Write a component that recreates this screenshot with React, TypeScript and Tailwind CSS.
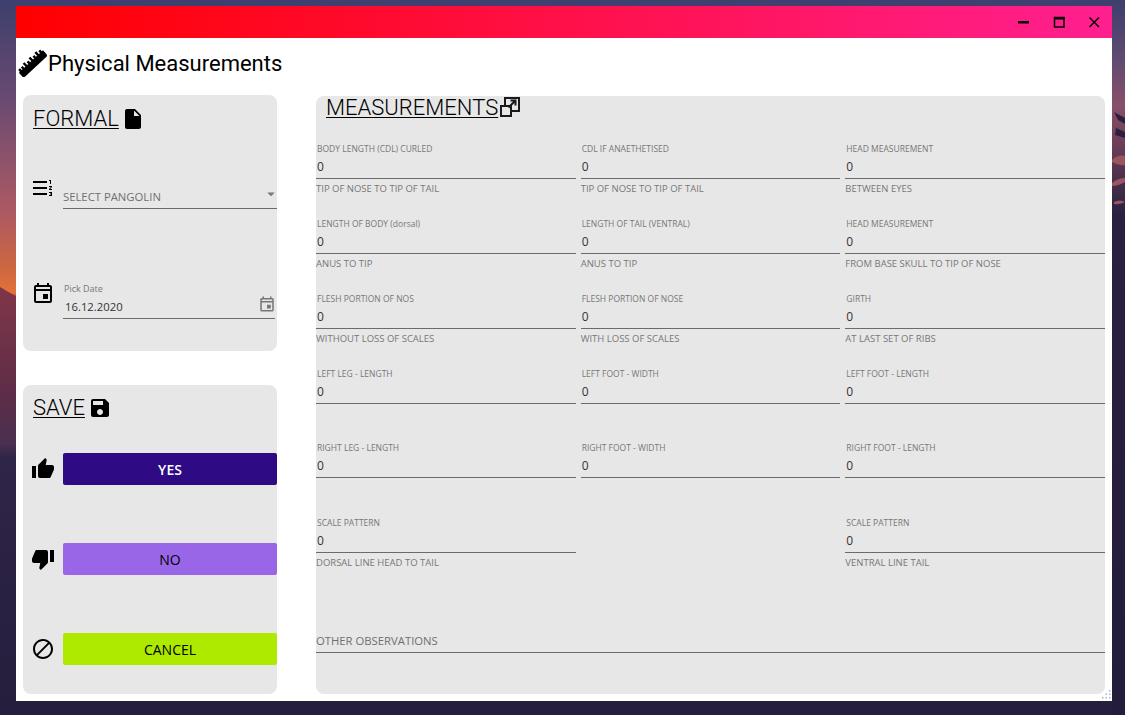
import { MdInsertDriveFile, MdFormatListNumberedRtl, MdOutlineEvent, MdSave, MdThumbUp, MdThumbDown, MdBlock, MdArrowDropDown } from "react-icons/md";

const rows = [
  [
    { label: "BODY LENGTH (CDL) CURLED", help: "TIP OF NOSE TO TIP OF TAIL" },
    { label: "CDL IF ANAETHETISED", help: "TIP OF NOSE TO TIP OF TAIL" },
    { label: "HEAD MEASUREMENT", help: "BETWEEN EYES" },
  ],
  [
    { label: "LENGTH OF BODY (dorsal)", help: "ANUS TO TIP" },
    { label: "LENGTH OF TAIL (VENTRAL)", help: "ANUS TO TIP" },
    { label: "HEAD MEASUREMENT", help: "FROM BASE SKULL TO TIP OF NOSE" },
  ],
  [
    { label: "FLESH PORTION OF NOS", help: "WITHOUT LOSS OF SCALES" },
    { label: "FLESH PORTION OF NOSE", help: "WITH LOSS OF SCALES" },
    { label: "GIRTH", help: "AT LAST SET OF RIBS" },
  ],
  [
    { label: "LEFT LEG - LENGTH", help: "" },
    { label: "LEFT FOOT - WIDTH", help: "" },
    { label: "LEFT FOOT - LENGTH", help: "" },
  ],
  [
    { label: "RIGHT LEG - LENGTH", help: "" },
    { label: "RIGHT FOOT - WIDTH", help: "" },
    { label: "RIGHT FOOT - LENGTH", help: "" },
  ],
  [
    { label: "SCALE PATTERN", help: "DORSAL LINE HEAD TO TAIL" },
    null,
    { label: "SCALE PATTERN", help: "VENTRAL LINE TAIL" },
  ],
];

const Wallpaper = () => (
  <svg className="absolute inset-0" width="1125" height="715">
    <defs>
      <linearGradient id="left" x1="0" y1="0" x2="0" y2="1">
        <stop offset="0" stopColor="#3d3f6d" />
        <stop offset="0.14" stopColor="#6a4a72" />
        <stop offset="0.3" stopColor="#ae5a62" />
        <stop offset="0.38" stopColor="#d0683f" />
        <stop offset="0.41" stopColor="#e57238" />
        <stop offset="0.42" stopColor="#7c3548" />
        <stop offset="0.55" stopColor="#5e2d48" />
        <stop offset="0.62" stopColor="#4a3050" />
        <stop offset="0.64" stopColor="#2f2548" />
        <stop offset="1" stopColor="#251e3c" />
      </linearGradient>
      <linearGradient id="right" x1="0" y1="0" x2="0" y2="1">
        <stop offset="0" stopColor="#3d3f6d" />
        <stop offset="0.08" stopColor="#5f4a72" />
        <stop offset="0.15" stopColor="#8a4f68" />
        <stop offset="0.2" stopColor="#6d3f58" />
        <stop offset="0.3" stopColor="#2a2140" />
        <stop offset="1" stopColor="#231c3a" />
      </linearGradient>
    </defs>
    <rect x="0" y="0" width="1125" height="715" fill="#251e3c" />
    <rect x="0" y="0" width="16" height="715" fill="url(#left)" />
    <path d="M0 287Q8 292 16 296V302H0Z" fill="#7c3548" />
    <rect x="0" y="0" width="1125" height="6" fill="#3f4070" />
    <rect x="1112" y="0" width="13" height="715" fill="url(#right)" />
    <path d="M1114 112 L1125 118 L1125 124 L1118 120Z M1116 128 L1125 132 L1125 138 L1115 135Z" fill="#2a2140" />
    <path d="M1112 160 Q1118 154 1125 156 L1125 165 Q1118 166 1112 162Z M1112 183 Q1118 178 1125 178 L1125 182 Q1118 186 1112 186Z M1114 202 Q1120 199 1125 202 Q1119 205 1114 204Z" fill="#9a5560" />
  </svg>
);

const WindowButtons = () => (
  <div className="flex items-center gap-[21px] pr-[11px]">
    <svg width="14" height="14" viewBox="0 0 14 14"><rect x="1" y="6" width="11" height="2.5" fill="#000" /></svg>
    <svg width="14" height="14" viewBox="0 0 14 14"><path d="M2.5 2.5h9.5v9.5h-9.5z" fill="none" stroke="#000" strokeWidth="1.5" /><rect x="2" y="2" width="10.5" height="2.5" fill="#000" /></svg>
    <svg width="14" height="14" viewBox="0 0 14 14"><path d="M2.5 2.5l9.5 9.5M12 2.5l-9.5 9.5" stroke="#000" strokeWidth="1.4" /></svg>
  </div>
);

const RulerIcon = () => (
  <svg width="30" height="30" viewBox="0 0 30 30">
    <g transform="translate(15 15) rotate(-43)" fill="#000">
      <rect x="-17" y="-1" width="33" height="7" />
      {[-15.5, -12, -8, -4, 0, 4, 8, 12].map((x) => (
        <rect key={x} x={x} y={x % 8 === 0 ? -5 : -3.5} width="2.4" height="5" />
      ))}
    </g>
  </svg>
);

const LinkBoxIcon = () => (
  <svg width="21" height="21" viewBox="0 0 21 21" fill="none" stroke="#1a1a1a" strokeWidth="2" className="ml-px">
    <path d="M6 9V2h14v13h-7" />
    <rect x="2" y="10" width="10" height="10" />
    <path d="M9.5 11.5l7-7M11.5 4.5h5v5" />
  </svg>
);

const Field = ({ label, help }: { label: string; help: string }) => (
  <div className="flex h-[74.8px] flex-col">
    <div className="h-[18px] pl-px text-[8.5px] leading-[19px] text-[#777]">{label}</div>
    <div className="h-[22px] border-b border-[#6b6b6b] pl-px text-xs leading-[19px] text-[#333]">0</div>
    <div className="mt-[3px] text-[9.5px] leading-[14px] text-[#777]">{help}</div>
  </div>
);

const ActionRow = ({ icon, label, className }: { icon: React.ReactNode; label: string; className: string }) => (
  <div className="flex items-center">
    <div className="flex w-10 justify-center text-black">{icon}</div>
    <button className={`flex h-8 w-[214px] items-center justify-center rounded-[2px] pt-px text-sm ${className}`}>{label}</button>
  </div>
);

export default function App() {
  return (
    <div className="relative h-[715px] w-[1125px] overflow-hidden pl-4 pt-[6px] font-['Open_Sans',sans-serif]">
      <Wallpaper />
      <div className="relative flex h-[695px] w-[1096px] flex-col bg-white">
        <div className="flex h-8 items-center justify-end bg-[linear-gradient(90deg,#ff0000,#ff2090)]">
          <WindowButtons />
        </div>
        <div className="flex h-[57px] items-start pl-[1px] pt-[9px] font-['Roboto',sans-serif] text-[22px] leading-[32px] text-black">
          <RulerIcon />
          <span className="ml-[1px] pt-px">Physical Measurements</span>
        </div>
        <div className="flex flex-1 items-start pl-[7px]">
          <div className="flex w-[254px] flex-col gap-[34px]">
            <div className="h-[256px] rounded-lg bg-[#e7e7e7] pl-[10px]">
              <div className="flex items-center pt-[10px] font-['Roboto',sans-serif] text-[22px] font-[350] leading-[28px] text-black">
                <span className="underline decoration-1 underline-offset-2">FORMAL</span>
                <MdInsertDriveFile size={24} className="ml-[2px]" />
              </div>
              <div className="mt-[42px] flex items-start">
                <MdFormatListNumberedRtl size={24} className="-ml-[2px] mt-[1px] text-black" />
                <div className="relative ml-2 mt-[10px] h-[24px] w-[214px] border-b border-[#6b6b6b] text-[11.3px] leading-[23px] text-[#707070]">
                  SELECT PANGOLIN
                  <MdArrowDropDown size={18} className="absolute right-[-3px] top-[0px] text-[#777]" />
                </div>
              </div>
              <div className="mt-[72px] flex items-start">
                <MdOutlineEvent size={24} className="-ml-[2px] text-black" />
                <div className="relative ml-2 mt-px h-[37px] w-[212px] border-b border-[#6b6b6b]">
                  <div className="pl-px text-[9px] leading-[14px] text-[#777]">Pick Date</div>
                  <div className="pl-[2px] pt-px text-[11.3px] leading-[20px] text-[#333]">16.12.2020</div>
                  <MdOutlineEvent size={18} className="absolute right-[-1px] top-[13px] text-[#777]" />
                </div>
              </div>
            </div>
            <div className="h-[309px] rounded-lg bg-[#e7e7e7] pl-[8px]">
              <div className="flex items-center pl-[2px] pt-[9px] font-['Roboto',sans-serif] text-[22px] font-[350] leading-[28px] text-black">
                <span className="underline decoration-1 underline-offset-2">SAVE</span>
                <MdSave size={24} className="ml-[3px]" />
              </div>
              <div className="-ml-[8px] mt-[31px] flex flex-col gap-[58px]">
                <ActionRow icon={<MdThumbUp size={24} />} label="YES" className="bg-[#2e0a85] font-semibold text-white" />
                <ActionRow icon={<MdThumbDown size={24} />} label="NO" className="bg-[#9966e8] font-medium text-black" />
                <ActionRow icon={<MdBlock size={24} />} label="CANCEL" className="bg-[#aeea00] font-medium text-black" />
              </div>
            </div>
          </div>
          <div className="ml-[39px] mt-px h-[598px] w-[789px] rounded-lg bg-[#e7e7e7]">
            <div className="flex h-[43.3px] items-start pl-[10px] font-['Roboto',sans-serif] text-[22px] font-[350] leading-[24px] text-black">
              <span className="underline decoration-1 underline-offset-2">MEASUREMENTS</span>
              <LinkBoxIcon />
            </div>
            <div className="grid grid-cols-3 gap-x-[5px]">
              {rows.map((row, i) =>
                row.map((f, j) => (f ? <Field key={`${i}-${j}`} label={f.label} help={f.help} /> : <div key={`${i}-${j}`} />))
              )}
            </div>
            <div className="mt-[43.7px] border-b border-[#6b6b6b] pb-[3px] text-[11.3px] leading-[17px] text-[#6f6f6f]">OTHER OBSERVATIONS</div>
          </div>
        </div>
        <svg className="absolute bottom-[1px] right-[1px]" width="11" height="11" fill="#aab4d0">
          <rect x="9" y="1" width="1.5" height="1.5" /><rect x="5.5" y="4.5" width="1.5" height="1.5" /><rect x="9" y="4.5" width="1.5" height="1.5" />
          <rect x="2" y="8" width="1.5" height="1.5" /><rect x="5.5" y="8" width="1.5" height="1.5" /><rect x="9" y="8" width="1.5" height="1.5" />
        </svg>
      </div>
    </div>
  );
}
